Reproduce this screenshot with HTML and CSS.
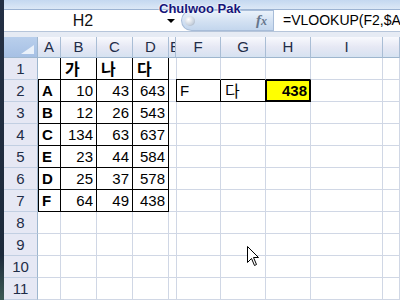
FILE: index.html
```html
<!DOCTYPE html>
<html lang="ko">
<head>
    <meta charset="UTF-8">
    <meta name="viewport" content="width=device-width, initial-scale=1.0">
    <title>VLOOKUP</title>
    <link rel="stylesheet" href="styles.css">
</head>
<body>
    <div class="screen">
        <div class="edge"></div>
        <div class="window">
            <div class="fbar">
                <div class="fbar-top"></div>
                <div class="fbar-row">
                    <div class="namebox"><span class="name">H2</span><span class="drop"></span></div>
                    <div class="fx-pill"><span class="knob"></span><span class="fx">f<span>x</span></span></div>
                    <div class="formula">=VLOOKUP(F2,$A</div>
                </div>
                <div class="fbar-bottom"></div>
            </div>
            <div class="sheet">
                <!-- header -->
                <div class="corner"><svg width="13" height="9" viewBox="0 0 13 9"><polygon points="13,0 13,9 0,9" fill="#eaf1fa"/></svg></div>
                <div class="ch">A</div><div class="ch">B</div><div class="ch">C</div><div class="ch">D</div>
                <div class="ch e">E</div><div class="ch">F</div><div class="ch">G</div><div class="ch">H</div>
                <div class="ch">I</div><div class="ch"></div>

                <div class="rh">1</div>
                <div class="c br bb"></div><div class="c br bb ko">가</div><div class="c br bb ko">나</div><div class="c br bb ko">다</div>
                <div class="c"></div><div class="c bb"></div><div class="c bb"></div><div class="c bb"></div><div class="c"></div><div class="c"></div>

                <div class="rh">2</div>
                <div class="c br bb bl key">A</div><div class="c br bb num">10</div><div class="c br bb num">43</div><div class="c br bb num">643</div>
                <div class="c br"></div><div class="c br bb">F</div><div class="c br bb ko-r">다</div><div class="c br bb num hit">438</div><div class="c"></div><div class="c"></div>

                <div class="rh">3</div>
                <div class="c br bb bl key">B</div><div class="c br bb num">12</div><div class="c br bb num">26</div><div class="c br bb num">543</div>
                <div class="c"></div><div class="c"></div><div class="c"></div><div class="c"></div><div class="c"></div><div class="c"></div>

                <div class="rh">4</div>
                <div class="c br bb bl key">C</div><div class="c br bb num">134</div><div class="c br bb num">63</div><div class="c br bb num">637</div>
                <div class="c"></div><div class="c"></div><div class="c"></div><div class="c"></div><div class="c"></div><div class="c"></div>

                <div class="rh">5</div>
                <div class="c br bb bl key">E</div><div class="c br bb num">23</div><div class="c br bb num">44</div><div class="c br bb num">584</div>
                <div class="c"></div><div class="c"></div><div class="c"></div><div class="c"></div><div class="c"></div><div class="c"></div>

                <div class="rh">6</div>
                <div class="c br bb bl key">D</div><div class="c br bb num">25</div><div class="c br bb num">37</div><div class="c br bb num">578</div>
                <div class="c"></div><div class="c"></div><div class="c"></div><div class="c"></div><div class="c"></div><div class="c"></div>

                <div class="rh">7</div>
                <div class="c br bb bl key">F</div><div class="c br bb num">64</div><div class="c br bb num">49</div><div class="c br bb num">438</div>
                <div class="c"></div><div class="c"></div><div class="c"></div><div class="c"></div><div class="c"></div><div class="c"></div>

                <div class="rh">8</div>
                <div class="c"></div><div class="c"></div><div class="c"></div><div class="c"></div><div class="c"></div>
                <div class="c"></div><div class="c"></div><div class="c"></div><div class="c"></div><div class="c"></div>

                <div class="rh">9</div>
                <div class="c"></div><div class="c"></div><div class="c"></div><div class="c"></div><div class="c"></div>
                <div class="c"></div><div class="c"></div><div class="c"></div><div class="c"></div><div class="c"></div>

                <div class="rh">10</div>
                <div class="c"></div><div class="c"></div><div class="c"></div><div class="c"></div><div class="c"></div>
                <div class="c"></div><div class="c"></div><div class="c"></div><div class="c"></div><div class="c"></div>

                <div class="rh">11</div>
                <div class="c"></div><div class="c"></div><div class="c"></div><div class="c"></div><div class="c"></div>
                <div class="c"></div><div class="c"></div><div class="c"></div><div class="c"></div><div class="c"></div>
            </div>
        </div>
        <div class="watermark">Chulwoo Pak</div>
        <svg class="cursor" width="13" height="21" viewBox="0 0 13 21">
            <path d="M0.5 0.5 L0.5 16.5 L4.5 12.5 L7.5 19.5 L9.5 18.5 L6.5 11.5 L11.5 11.5 Z" fill="#fff" stroke="#000" stroke-width="1"/>
        </svg>
    </div>
</body>
</html>
```

FILE: styles.css
```css
body {
    margin: 0;
    font-family: "Liberation Sans", "Noto Sans CJK KR", sans-serif;
    background-color: #fff;
}
.screen {
    position: relative;
    width: 400px;
    height: 300px;
    overflow: hidden;
    display: flex;
}
.edge {
    width: 4px;
    background: linear-gradient(#243044, #1d2a3b 85%, #3c5a55);
}
.window {
    flex: 1;
    display: flex;
    flex-direction: column;
    min-width: 0;
}

/* formula bar */
.fbar {
    height: 37px;
    display: flex;
    flex-direction: column;
}
.fbar-top {
    height: 10px;
    box-sizing: border-box;
    background: linear-gradient(#c4d8f0, #dce8f6);
    border-bottom: 1px solid #9cb3d2;
}
.fbar-row {
    height: 21px;
    display: flex;
    background-color: #fff;
}
.fbar-bottom {
    height: 6px;
    box-sizing: border-box;
    background-color: #e6ebf4;
    border-top: 1px solid #b6c5da;
}
.namebox {
    width: 177px;
    display: flex;
    align-items: center;
}
.name {
    width: 158px;
    text-align: center;
    font-size: 16px;
    color: #111;
}
.drop {
    margin-left: 5px;
    border-left: 4px solid transparent;
    border-right: 4px solid transparent;
    border-top: 4px solid #000;
}
.fx-pill {
    width: 92px;
    box-sizing: border-box;
    display: flex;
    align-items: center;
    justify-content: space-between;
    padding: 0 6px 0 3px;
    border: 1px solid #a7bcd8;
    border-right: none;
    border-radius: 11px 0 0 11px;
    background: linear-gradient(#eaf2fb, #d3e1f2 55%, #c3d6ed);
}
.knob {
    width: 10px;
    height: 10px;
    border-radius: 50%;
    background: radial-gradient(circle at 35% 35%, #fff, #c9d2de 60%, #8c99ab);
}
.fx {
    font-family: "Liberation Serif", serif;
    font-style: italic;
    font-weight: bold;
    font-size: 15px;
    color: #66768c;
}
.fx span {
    font-size: 12px;
}
.formula {
    flex: 1;
    border-left: 1px solid #a7bcd8;
    padding-left: 9px;
    font-size: 14px;
    line-height: 21px;
    white-space: nowrap;
    overflow: hidden;
    color: #000;
}

/* sheet grid */
.sheet {
    flex: 1;
    display: grid;
    grid-template-columns: 34px 23px 36px 36px 36px 7px 45px 45px 45px 72px 1fr;
    grid-template-rows: 21px repeat(11, 22px);
    font-size: 15px;
}
.corner {
    display: flex;
    align-items: flex-end;
    justify-content: flex-end;
    padding: 0 3px 3px 0;
    background: linear-gradient(#b9cfec, #a6c0e4);
    border-right: 1px solid #9eb6ce;
    border-bottom: 1px solid #9eb6ce;
}
.ch {
    background: linear-gradient(#f8f9fd, #e6e8f4 50%, #d6e2f1);
    border-right: 1px solid #a9bdd5;
    border-bottom: 1px solid #9eb6ce;
    text-align: center;
    line-height: 20px;
    color: #1f2d48;
    overflow: hidden;
    white-space: nowrap;
}
.ch.e {
    text-align: left;
    padding-left: 1px;
}
.rh {
    background-color: #e6e8f4;
    border-right: 1px solid #9eb6ce;
    border-bottom: 1px solid #c2cfe2;
    text-align: center;
    line-height: 21px;
    color: #1f2d48;
}
.c {
    border-right: 1px solid #d0d7e5;
    border-bottom: 1px solid #d0d7e5;
    padding: 0 3px 0 4px;
    line-height: 21px;
    white-space: nowrap;
    overflow: hidden;
    color: #000;
}
.br {
    border-right-color: #000;
}
.bb {
    border-bottom-color: #000;
}
.bl {
    box-shadow: inset 1px 0 0 #000;
}
.num {
    text-align: right;
}
.key {
    font-weight: bold;
}
.ko {
    font-family: "Noto Sans CJK KR", sans-serif;
    font-weight: bold;
    font-size: 16px;
    overflow: visible;
}
.ko-r {
    font-family: "Noto Sans CJK KR", sans-serif;
    font-size: 16px;
    overflow: visible;
}
.hit {
    background-color: #ff0;
    font-weight: bold;
    box-shadow: inset 0 0 0 1px #000;
}

/* overlays */
.watermark {
    position: absolute;
    left: 159px;
    top: 1px;
    font-weight: bold;
    font-size: 13px;
    color: #15157a;
    text-shadow: 0 0 2px #fff, 0 0 2px #fff;
}
.cursor {
    position: absolute;
    left: 247px;
    top: 246px;
}
```
